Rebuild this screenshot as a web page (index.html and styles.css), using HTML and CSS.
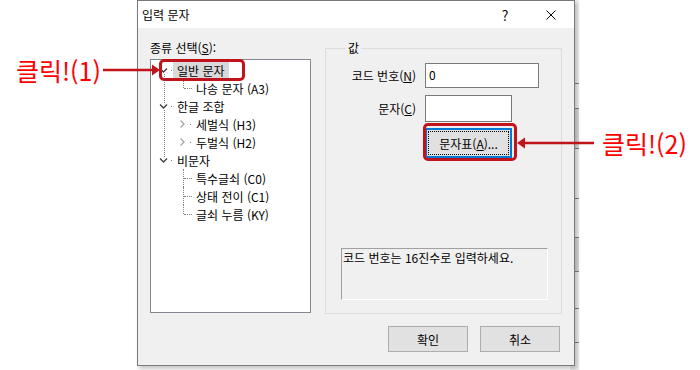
FILE: index.html
```html
<!DOCTYPE html>
<html lang="ko">
<head>
  <meta charset="UTF-8" />
  <title>입력 문자</title>
  <link rel="stylesheet" href="styles.css">
</head>
<body>
  <div class="screen">
    <!-- edge of the window behind the dialog -->
    <div class="behind">
      <div class="behind-row" style="height: 84px"></div>
      <div class="behind-row" style="height: 25px"></div>
      <div class="behind-row shade" style="height: 40px"></div>
      <div class="behind-row" style="height: 50px"></div>
      <div class="behind-row" style="height: 39px"></div>
      <div class="behind-row shade" style="height: 34px"></div>
      <div class="behind-row" style="height: 37px"></div>
      <div class="behind-row" style="height: 34px"></div>
    </div>

    <div class="dialog">
      <div class="titlebar">
        <span class="title">입력 문자</span>
        <span class="help">?</span>
        <span class="close">
          <svg width="10" height="10" viewBox="0 0 10 10"><path d="M0.5 0.5L9.5 9.5M9.5 0.5L0.5 9.5" stroke="#000" stroke-width="1"/></svg>
        </span>
      </div>
      <div class="content">
        <div class="panes">
          <div class="kind">
            <div class="caption">종류 선택(<u>S</u>):</div>
            <div class="tree-box">
              <ul class="tree">
                <li class="line">
                  <div class="row">
                    <span class="exp"><svg width="18" height="18" viewBox="0 0 18 18"><polyline points="5,7.5 8.5,11 12,7.5" fill="none" stroke="#3c3c3c" stroke-width="1.3"/><rect x="16" y="9" width="1" height="1" fill="#808080"/></svg></span>
                    <span class="label selected">일반 문자</span>
                  </div>
                  <ul>
                    <li class="leaf"><div class="row"><span class="exp"></span><span class="label">나송 문자 (A3)</span></div></li>
                  </ul>
                </li>
                <li class="line">
                  <div class="row">
                    <span class="exp"><svg width="18" height="18" viewBox="0 0 18 18"><polyline points="5,7.5 8.5,11 12,7.5" fill="none" stroke="#3c3c3c" stroke-width="1.3"/><rect x="16" y="9" width="1" height="1" fill="#808080"/></svg></span>
                    <span class="label">한글 조합</span>
                  </div>
                  <ul>
                    <li><div class="row"><span class="exp"><svg width="18" height="18" viewBox="0 0 18 18"><polyline points="6.5,5.5 10,9 6.5,12.5" fill="none" stroke="#a6a6a6" stroke-width="1.3"/><rect x="16" y="9" width="1" height="1" fill="#808080"/></svg></span><span class="label">세벌식 (H3)</span></div></li>
                    <li><div class="row"><span class="exp"><svg width="18" height="18" viewBox="0 0 18 18"><polyline points="6.5,5.5 10,9 6.5,12.5" fill="none" stroke="#a6a6a6" stroke-width="1.3"/><rect x="16" y="9" width="1" height="1" fill="#808080"/></svg></span><span class="label">두벌식 (H2)</span></div></li>
                  </ul>
                </li>
                <li>
                  <div class="row">
                    <span class="exp"><svg width="18" height="18" viewBox="0 0 18 18"><polyline points="5,7.5 8.5,11 12,7.5" fill="none" stroke="#3c3c3c" stroke-width="1.3"/><rect x="16" y="9" width="1" height="1" fill="#808080"/></svg></span>
                    <span class="label">비문자</span>
                  </div>
                  <ul>
                    <li class="leaf mid"><div class="row"><span class="exp"></span><span class="label">특수글쇠 (C0)</span></div></li>
                    <li class="leaf mid"><div class="row"><span class="exp"></span><span class="label">상태 전이 (C1)</span></div></li>
                    <li class="leaf"><div class="row"><span class="exp"></span><span class="label">글쇠 누름 (KY)</span></div></li>
                  </ul>
                </li>
              </ul>
            </div>
          </div>

          <fieldset class="group">
            <legend>값</legend>
            <div class="fields">
              <label class="field-label">코드 번호(<u>N</u>)</label>
              <div class="input code">0</div>
              <label class="field-label">문자(<u>C</u>)</label>
              <div class="input char"></div>
              <span></span>
              <button class="btn btn-focus">문자표(<u>A</u>)...</button>
            </div>
            <div class="desc">코드 번호는 16진수로 입력하세요.</div>
          </fieldset>
        </div>

        <div class="actions">
          <button class="btn">확인</button>
          <button class="btn">취소</button>
        </div>
      </div>
    </div>

    <!-- annotations -->
    <div class="note note-1">클릭!(1)</div>
    <svg class="arrow arrow-1" width="58" height="14" viewBox="0 0 58 14">
      <line x1="0" y1="7" x2="50" y2="7" stroke="#c0131b" stroke-width="2.5"/>
      <polygon points="49,1.5 57,7 49,12.5" fill="#c0131b"/>
    </svg>
    <div class="mark mark-1"></div>

    <div class="note note-2">클릭!(2)</div>
    <svg class="arrow arrow-2" width="78" height="14" viewBox="0 0 78 14">
      <line x1="8" y1="7" x2="78" y2="7" stroke="#c0131b" stroke-width="2.5"/>
      <polygon points="1,7 9,1.5 9,12.5" fill="#c0131b"/>
    </svg>
    <div class="mark mark-2"></div>
  </div>
</body>
</html>
```

FILE: styles.css
```css
body {
  margin: 0;
  background: #fff;
  font-family: "Noto Sans CJK KR", "Noto Sans", sans-serif;
  font-size: 12px;
  color: #000;
}
.screen {
  position: relative;
  width: 700px;
  height: 370px;
  overflow: hidden;
}
.behind {
  position: absolute;
  left: 570px;
  top: 0;
  width: 9px;
  height: 370px;
  background: #ececec;
}
.behind-row {
  border-bottom: 1px solid #7c7c7c;
  box-sizing: border-box;
}
.behind-row.shade {
  background: #d6d6d6;
}
.dialog {
  position: relative;
  width: 438px;
  margin-left: 137px;
  box-sizing: border-box;
  border: 1px solid #7a7a7a;
  background: #f0f0f0;
  box-shadow: 2px 3px 4px rgba(0, 0, 0, 0.22);
}
.titlebar {
  display: flex;
  align-items: center;
  height: 27px;
  background: #fff;
}
.title {
  flex: 1;
  padding-left: 4px;
  line-height: 16px;
}
.help {
  width: 46px;
  text-align: center;
  font-size: 14px;
}
.close {
  width: 46px;
  display: flex;
  justify-content: center;
}
.close svg {
  display: block;
}
.content {
  padding: 12px 12px 13px 12px;
}
.panes {
  display: flex;
  gap: 14px;
}
.kind {
  width: 161px;
}
.caption {
  line-height: 16px;
  margin-bottom: 3px;
}
.tree-box {
  box-sizing: border-box;
  height: 254px;
  border: 1px solid #828790;
  background: #fff;
  padding: 1px 0 0 4px;
}
.tree, .tree ul {
  list-style: none;
  margin: 0;
  padding: 0;
}
.tree ul {
  padding-left: 19px;
}
.tree li {
  position: relative;
}
.row {
  display: flex;
  align-items: center;
  height: 18px;
}
.exp {
  width: 18px;
  height: 18px;
  flex: none;
}
.exp svg {
  display: block;
}
.label {
  padding: 0 4px;
  line-height: 17px;
  white-space: nowrap;
}
.label.selected {
  background: #d9d9d9;
}
.tree li.line::before {
  content: "";
  position: absolute;
  left: 9px;
  top: 13px;
  bottom: -6px;
  border-left: 1px dotted #808080;
}
.tree li.leaf::before {
  content: "";
  position: absolute;
  left: 9px;
  top: 0;
  height: 9px;
  border-left: 1px dotted #808080;
}
.tree li.leaf.mid::before {
  height: 18px;
}
.tree li.leaf::after {
  content: "";
  position: absolute;
  left: 10px;
  top: 9px;
  width: 8px;
  border-top: 1px dotted #808080;
}
.group {
  flex: 1;
  box-sizing: border-box;
  height: 274px;
  margin: 0;
  border: 1px solid #dcdcdc;
  padding: 7px 13px 13px 15px;
  display: flex;
  flex-direction: column;
}
.group legend {
  margin-left: 5px;
  padding: 0 2px;
  line-height: 16px;
}
.fields {
  display: grid;
  grid-template-columns: 75px auto;
  grid-template-rows: 25px 27px 30px;
  column-gap: 9px;
  row-gap: 7px;
}
.field-label {
  justify-self: end;
  align-self: center;
  line-height: 16px;
}
.input {
  justify-self: start;
  box-sizing: border-box;
  background: #fff;
  border: 1px solid #7a7a7a;
  padding: 0 3px;
  line-height: 22px;
}
.input.code {
  width: 114px;
}
.input.char {
  width: 87px;
}
.btn {
  font: inherit;
  color: #000;
  background: #e1e1e1;
  border: 1px solid #adadad;
  width: 80px;
  height: 26px;
  padding: 0;
}
.btn-focus {
  justify-self: start;
  width: 87px;
  height: 30px;
  margin-top: -1px;
  border-color: #0078d7;
  box-shadow: inset 0 0 0 1px #0078d7;
  outline: 1px dotted #000;
  outline-offset: -4px;
}
.desc {
  margin-top: auto;
  height: 52px;
  box-sizing: border-box;
  border: 1px solid;
  border-color: #a0a0a0 #fff #fff #a0a0a0;
  padding: 1px;
  line-height: 16px;
}
.actions {
  display: flex;
  justify-content: flex-end;
  gap: 12px;
  margin-top: 12px;
  padding-right: 2px;
}
.note {
  position: absolute;
  color: #ff0000;
  font-size: 25px;
  line-height: 28px;
  white-space: nowrap;
}
.note-1 {
  left: 16px;
  top: 56px;
}
.note-2 {
  left: 602px;
  top: 129px;
}
.arrow {
  position: absolute;
  display: block;
}
.arrow-1 {
  left: 103px;
  top: 63px;
}
.arrow-2 {
  left: 516px;
  top: 136px;
}
.mark {
  position: absolute;
  box-sizing: border-box;
  border: 3px solid #c0131b;
  border-radius: 5px;
}
.mark-1 {
  left: 159px;
  top: 59px;
  width: 86px;
  height: 22px;
}
.mark-2 {
  left: 423px;
  top: 123px;
  width: 94px;
  height: 38px;
}
```
